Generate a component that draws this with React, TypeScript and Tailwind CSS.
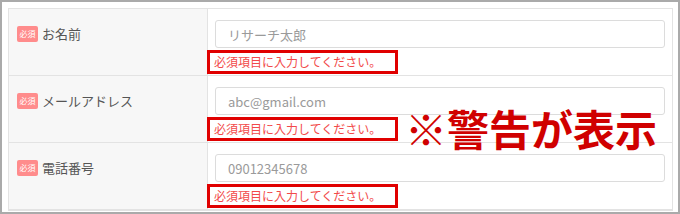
const fields = [
  { label: "お名前", placeholder: "リサーチ太郎" },
  { label: "メールアドレス", placeholder: "abc@gmail.com" },
  { label: "電話番号", placeholder: "09012345678" },
];

function Row({ label, placeholder }: { label: string; placeholder: string }) {
  return (
    <div className="flex h-[67px] border-b border-[#e3e3e3]">
      <div className="w-[199px] shrink-0 border-r border-[#e3e3e3] bg-[#f7f7f7] pl-[8px] pt-[11px]">
        <div className="flex h-[28px] items-center gap-[4px]">
          <span className="flex h-[16px] w-[21px] items-center justify-center rounded-[2px] bg-[#ff8c8c] text-[8px] leading-none text-white">
            必須
          </span>
          <span className="text-[13px] text-[#555]">{label}</span>
        </div>
      </div>
      <div className="flex-1 bg-white px-[7px] pt-[11px]">
        <input
          className="block h-[28px] w-full rounded-[3px] border border-[#dcdcdc] pl-[12px] text-[13px] text-[#555] outline-none placeholder:text-[#9a9a9a]"
          placeholder={placeholder}
          readOnly
        />
        <div className="ml-[-8px] mt-[2px] flex h-[24px] w-[191px] items-center border-[3px] border-[#e00000] bg-white pl-[4px] text-[12px] leading-none text-[#f24a4a]">
          必須項目に入力してください。
        </div>
      </div>
    </div>
  );
}

export default function App() {
  return (
    <div
      className="relative h-[214px] w-[680px] overflow-hidden border-2 border-[#aaaaaa] bg-white pl-[6px] pr-[5px] pt-[6px]"
      style={{ fontFamily: '"Noto Sans CJK JP", "Noto Sans", sans-serif' }}
    >
      <div className="border border-[#e3e3e3]">
        {fields.map((f) => (
          <Row key={f.label} label={f.label} placeholder={f.placeholder} />
        ))}
      </div>
      <div className="absolute left-[403px] top-[105px] text-[42px] font-bold leading-none text-[#d00000]">
        ※警告が表示
      </div>
    </div>
  );
}
